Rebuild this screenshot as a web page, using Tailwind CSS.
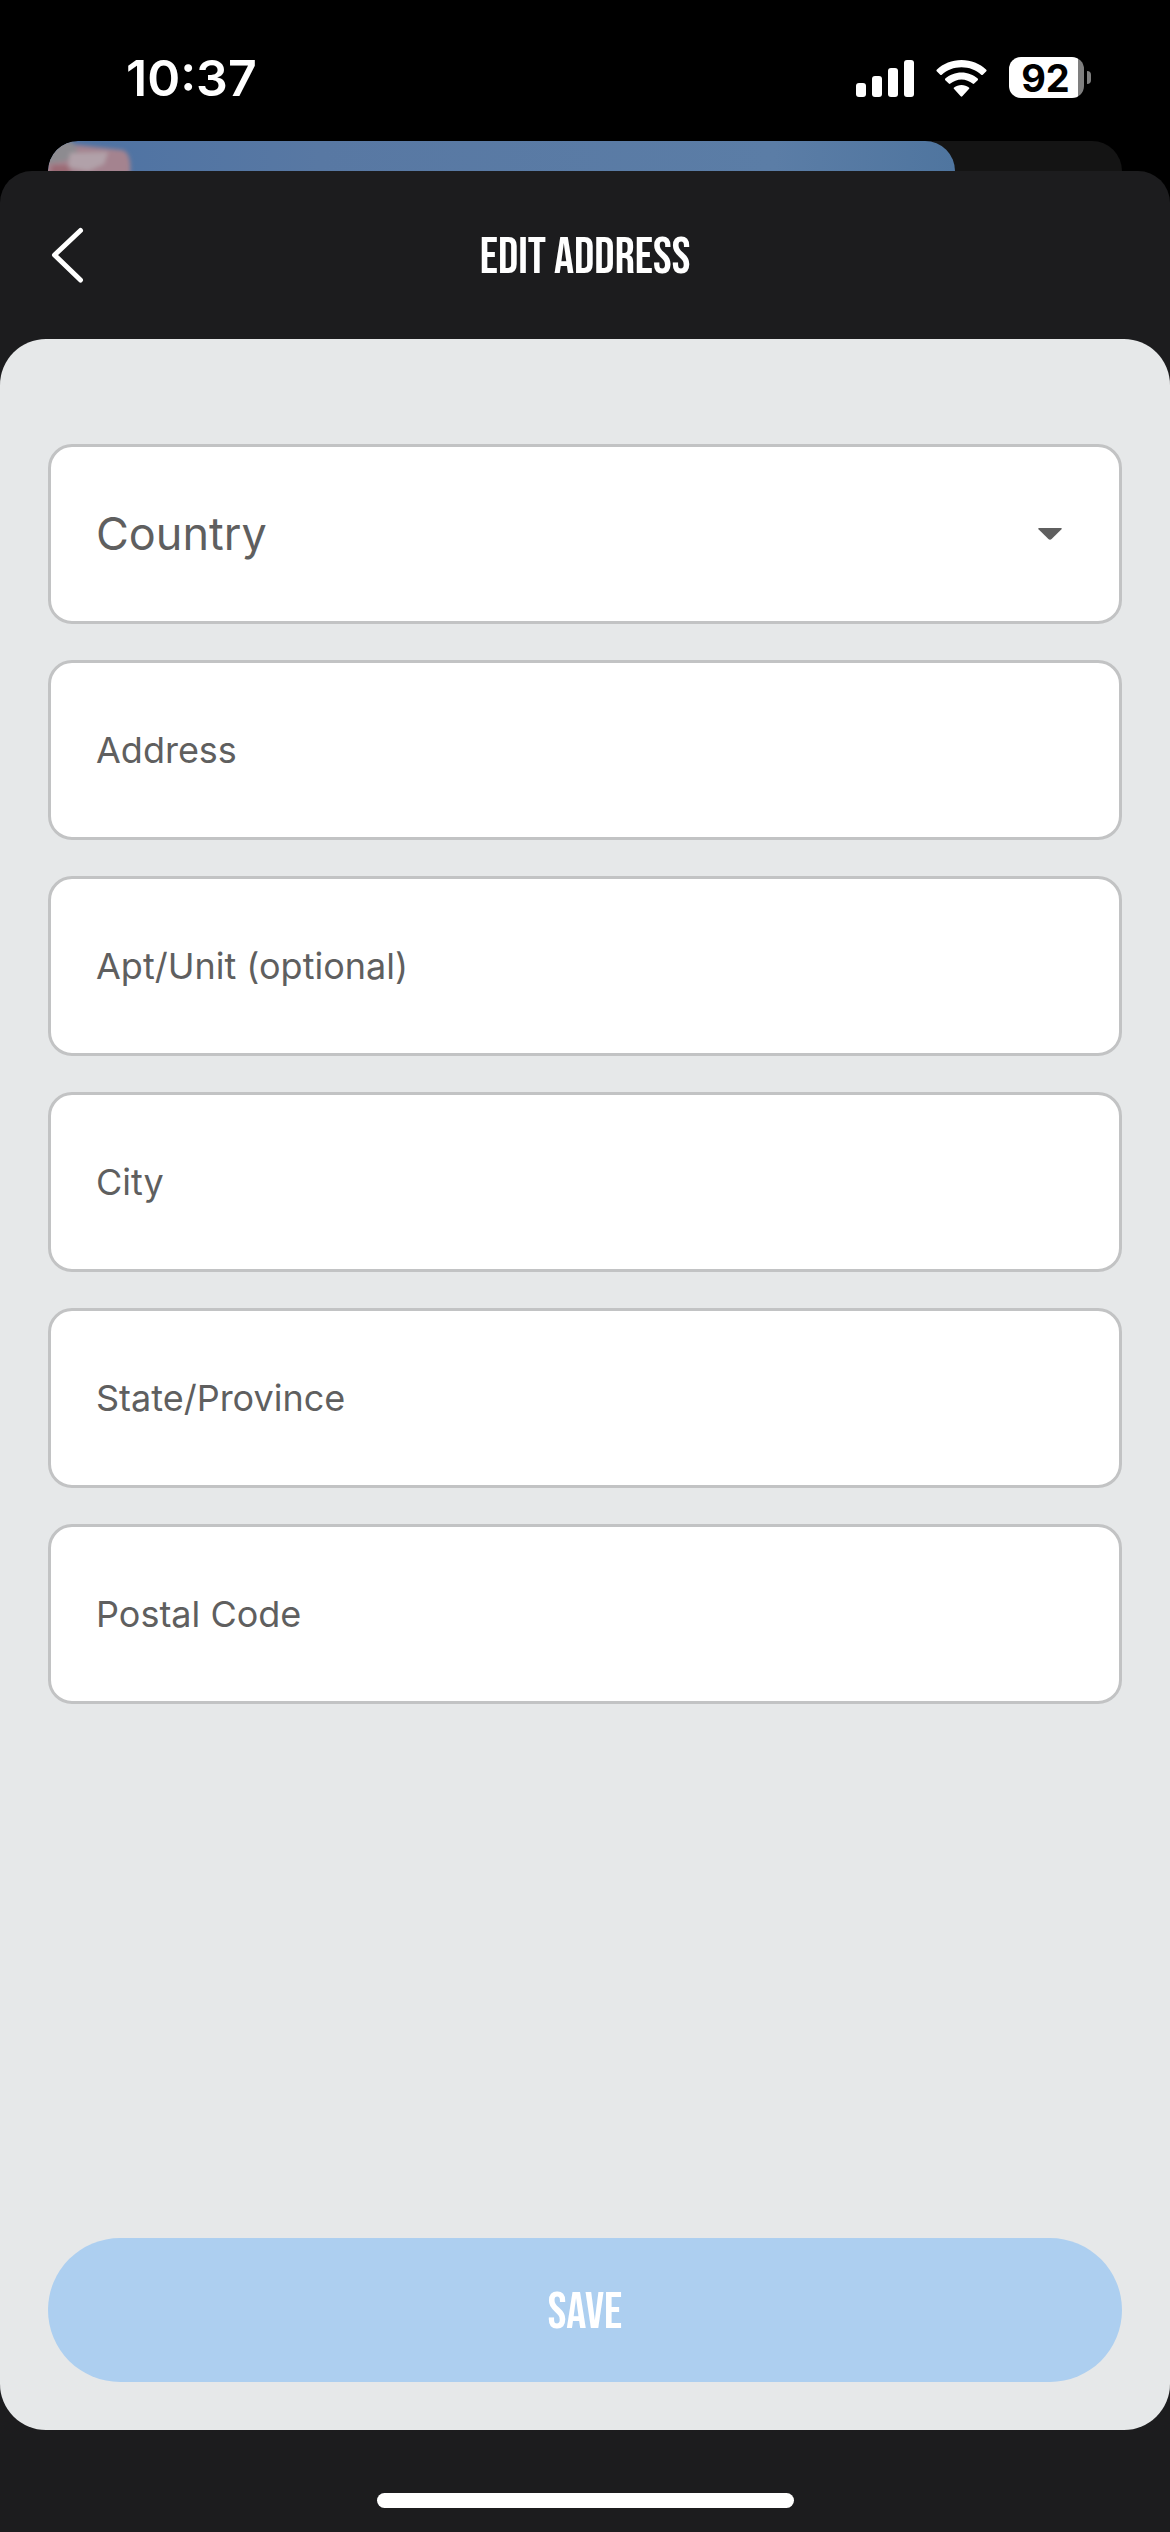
<!DOCTYPE html>
<html lang="en">
<head>
    <meta charset="UTF-8">
    <meta name="viewport" content="width=device-width, initial-scale=1.0">
    <title>Edit Address</title>
    <script src="https://cdn.jsdelivr.net/npm/@tailwindcss/browser@4"></script>
</head>
<body class="bg-black font-['Inter',sans-serif]">
    <div class="flex min-h-screen flex-col">
        <!-- Status bar -->
        <div class="flex h-[141px] items-center justify-between pt-[14px] pr-[79px] pl-[126px] text-white">
            <span class="text-[50px] leading-none font-semibold">10:37</span>
            <div class="flex items-center gap-[22px]">
                <svg class="h-[38px] w-[58px]" viewBox="0 0 58 38" fill="currentColor" aria-hidden="true">
                    <rect x="0" y="24" width="10" height="14" rx="3"/>
                    <rect x="16" y="17" width="10" height="21" rx="3"/>
                    <rect x="32" y="9" width="10" height="29" rx="3"/>
                    <rect x="48" y="1" width="10" height="37" rx="3"/>
                </svg>
                <svg class="h-[38px] w-[51px]" viewBox="0 0 51 38" fill="currentColor" aria-hidden="true">
                    <path d="M25.500 1C16 1 7.200 4.600 0.700 10.700Q0 11.500 0.700 12.300L4.200 15.700Q5 16.400 5.800 15.700C11 10.900 18 8.200 25.500 8.200S40 10.900 45.200 15.700Q46 16.400 46.800 15.700L50.300 12.300Q51 11.500 50.300 10.700C43.800 4.600 35 1 25.500 1Z"/>
                    <path d="M25.500 13.400C19.300 13.400 13.600 15.700 9.300 19.600Q8.500 20.400 9.300 21.200L12.800 24.600Q13.600 25.300 14.400 24.600C17.400 22 21.300 20.400 25.500 20.400S33.600 22 36.600 24.600Q37.400 25.300 38.200 24.600L41.700 21.200Q42.500 20.400 41.700 19.600C37.400 15.700 31.700 13.400 25.500 13.400Z"/>
                    <path d="M25.500 25.900C22.700 25.900 20.100 26.900 18.100 28.500Q17.300 29.200 18.100 30L24.700 37.300Q25.500 38.100 26.300 37.300L32.900 30Q33.700 29.200 32.900 28.500C30.900 26.900 28.300 25.900 25.500 25.900Z"/>
                </svg>
                <div class="flex items-center gap-[3px]">
                    <span class="flex h-[41px] w-[75px] items-center justify-center rounded-xl bg-linear-to-r from-white from-92% to-[#7f7f7f] to-92% pr-0.5 text-[38px] leading-none font-bold text-black">92</span>
                    <span class="h-[13px] w-1 rounded-r-full bg-[#7f7f7f]"></span>
                </div>
            </div>
        </div>

        <!-- Edge of the screen underneath -->
        <div class="mx-12 h-[30px] overflow-hidden rounded-t-[32px] bg-[#141414]">
            <svg class="h-full w-[907px] rounded-tl-[38px] rounded-tr-[38px]" viewBox="0 0 907 30" preserveAspectRatio="none" aria-hidden="true">
                <defs>
                    <linearGradient id="sky">
                        <stop offset="0" stop-color="#4d72a3"/>
                        <stop offset="0.3" stop-color="#5878a3"/>
                        <stop offset="0.8" stop-color="#5b7da6"/>
                        <stop offset="1" stop-color="#4f759f"/>
                    </linearGradient>
                    <filter id="soft"><feGaussianBlur stdDeviation="2"/></filter>
                </defs>
                <rect width="907" height="30" fill="url(#sky)"/>
                <g filter="url(#soft)">
                    <path d="M-6 0L30 4L74 9Q84 11 82 34H-6Z" fill="#a4838f"/>
                    <path d="M-6 0H24L30 10L18 20L-6 24Z" fill="#8d8b90"/>
                    <path d="M22 12L60 11L56 23L40 30L20 26Z" fill="#b1a1a9"/>
                    <path d="M2 34L4 24L20 24L24 34Z" fill="#9b6a75"/>
                </g>
            </svg>
        </div>

        <main class="flex grow flex-col rounded-t-[32px] bg-[#1c1c1e]">
            <header class="grid h-[168px] grid-cols-3 items-center px-12 text-white">
                <button type="button" aria-label="Back" class="justify-self-start">
                    <svg class="h-[56px] w-[40px]" viewBox="0 0 40 56" fill="none" stroke="currentColor" stroke-width="5" stroke-linecap="round" stroke-linejoin="round" aria-hidden="true">
                        <path d="M32.500 3.500L6.500 28L32.500 53"/>
                    </svg>
                </button>
                <h1 class="pt-1.5 text-center font-['Bebas_Neue','Roboto_Condensed',sans-serif] text-[50px] leading-none whitespace-nowrap">EDIT ADDRESS</h1>
            </header>

            <form class="flex grow flex-col rounded-[46px] bg-[#e6e8e9] px-12 pt-[105px] pb-12">
                <div class="flex flex-col gap-9 text-4xl text-[#5f5f5f]">
                    <div class="relative">
                        <select id="country" class="peer block h-[180px] w-full appearance-none rounded-3xl border-3 border-[#c2c3c4] bg-white px-12 text-[45px]">
                            <option value=""></option>
                        </select>
                        <label for="country" class="pointer-events-none absolute inset-y-0 left-12 flex items-center text-[45px]">Country</label>
                        <svg class="pointer-events-none absolute top-[84px] right-[60px] h-3 w-6" viewBox="0 0 24 12" fill="currentColor" aria-hidden="true">
                            <path d="M1 0H23Q24.500 0 23.500 1.200L13.600 11.100Q12 12.500 10.400 11.100L0.500 1.200Q-0.500 0 1 0Z"/>
                        </svg>
                    </div>
                    <div class="relative">
                        <input id="address" type="text" placeholder=" " class="peer block h-[180px] w-full rounded-3xl border-3 border-[#c2c3c4] bg-white px-12">
                        <label for="address" class="pointer-events-none absolute inset-y-0 left-12 hidden items-center peer-placeholder-shown:flex">Address</label>
                    </div>
                    <div class="relative">
                        <input id="unit" type="text" placeholder=" " class="peer block h-[180px] w-full rounded-3xl border-3 border-[#c2c3c4] bg-white px-12">
                        <label for="unit" class="pointer-events-none absolute inset-y-0 left-12 hidden items-center peer-placeholder-shown:flex">Apt/Unit (optional)</label>
                    </div>
                    <div class="relative">
                        <input id="city" type="text" placeholder=" " class="peer block h-[180px] w-full rounded-3xl border-3 border-[#c2c3c4] bg-white px-12">
                        <label for="city" class="pointer-events-none absolute inset-y-0 left-12 hidden items-center peer-placeholder-shown:flex">City</label>
                    </div>
                    <div class="relative">
                        <input id="state" type="text" placeholder=" " class="peer block h-[180px] w-full rounded-3xl border-3 border-[#c2c3c4] bg-white px-12">
                        <label for="state" class="pointer-events-none absolute inset-y-0 left-12 hidden items-center peer-placeholder-shown:flex">State/Province</label>
                    </div>
                    <div class="relative">
                        <input id="postal" type="text" placeholder=" " class="peer block h-[180px] w-full rounded-3xl border-3 border-[#c2c3c4] bg-white px-12">
                        <label for="postal" class="pointer-events-none absolute inset-y-0 left-12 hidden items-center peer-placeholder-shown:flex">Postal Code</label>
                    </div>
                </div>
                <button type="submit" class="mt-auto h-36 w-full rounded-full bg-[#adcff0] pt-1.5 font-['Bebas_Neue','Roboto_Condensed',sans-serif] text-[50px] leading-none text-white">SAVE</button>
            </form>

            <!-- Home indicator -->
            <div class="flex h-[102px] items-end justify-center pb-6">
                <div class="h-[15px] w-[417px] rounded-full bg-white"></div>
            </div>
        </main>
    </div>
</body>
</html>
